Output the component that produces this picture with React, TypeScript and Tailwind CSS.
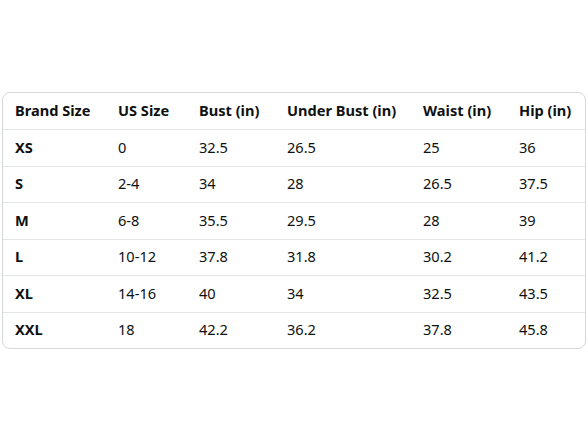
const headers = ["Brand Size", "US Size", "Bust (in)", "Under Bust (in)", "Waist (in)", "Hip (in)"];

const rows = [
  ["XS", "0", "32.5", "26.5", "25", "36"],
  ["S", "2-4", "34", "28", "26.5", "37.5"],
  ["M", "6-8", "35.5", "29.5", "28", "39"],
  ["L", "10-12", "37.8", "31.8", "30.2", "41.2"],
  ["XL", "14-16", "40", "34", "32.5", "43.5"],
  ["XXL", "18", "42.2", "36.2", "37.8", "45.8"],
];

const cols = "grid grid-cols-[103px_81px_88px_136px_96px_1fr] items-center";

export default function App() {
  return (
    <div className="w-[588px] h-[441px] bg-white pt-[92px] px-[2px] font-['Noto_Sans',sans-serif] text-[#0f1111] text-[14.6px]">
      <div className="border border-[#d5d9d9] rounded-lg overflow-hidden">
        <div className={`${cols} h-[36px] font-bold`}>
          {headers.map((h) => (
            <div key={h} className="pl-[12px] whitespace-nowrap">{h}</div>
          ))}
        </div>
        {rows.map((r) => (
          <div key={r[0]} className={`${cols} h-[36.5px] border-t border-[#e3e6e6]`}>
            {r.map((c, i) => (
              <div key={i} className={`pl-[12px] whitespace-nowrap ${i === 0 ? "font-bold" : ""}`}>{c}</div>
            ))}
          </div>
        ))}
      </div>
    </div>
  );
}
